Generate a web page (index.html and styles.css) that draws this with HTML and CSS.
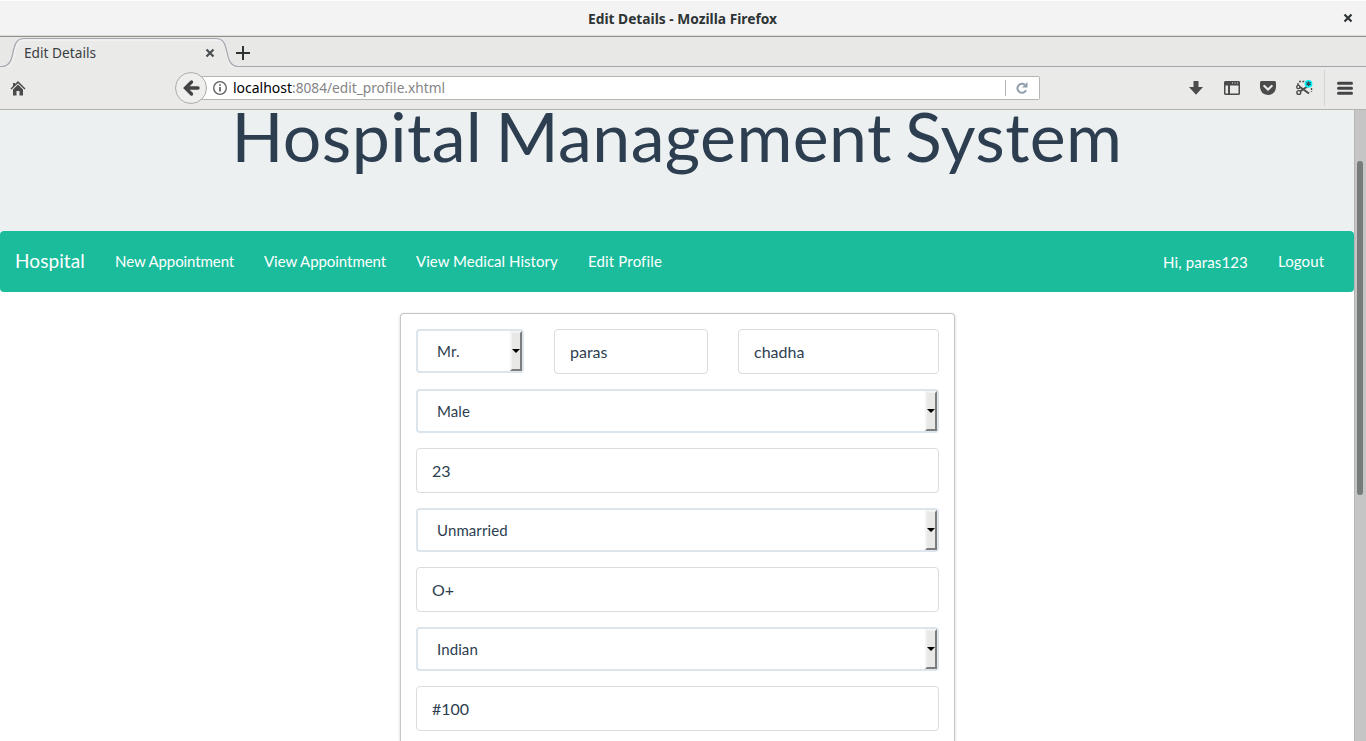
FILE: index.html
```html
<!DOCTYPE html>
<html lang="en">
<head>
<meta charset="utf-8">
<title>Edit Details</title>
<link rel="stylesheet" href="styles.css">
</head>
<body>
<div class="window">
  <header class="titlebar">
    <svg class="title" width="200" height="24"><text x="0" y="15.500" textLength="189" lengthAdjust="spacingAndGlyphs">Edit Details - Mozilla Firefox</text></svg>
    <svg class="close" width="10" height="10" viewBox="0 0 10 10"><path d="M1.5 1.5l7 7M8.5 1.5l-7 7"/></svg>
  </header>
  <div class="tabs">
    <svg class="tabshape" width="1366" height="30" viewBox="0 0 1366 30">
      <path class="tab-hi" d="M0 30.5H5C19 30 11 3 23 3H217C231 3 223 30 235 30.5H1366"/>
      <path class="tab-line" d="M0 29.5H2C18 29 8 1.5 24 1.5H216C232 1.5 222 29 238 29.500H1366"/>
      <text class="tablabel" x="24" y="21" textLength="72" lengthAdjust="spacingAndGlyphs">Edit Details</text>
      <path class="tabx" d="M206.500 12.500l7 7M213.500 12.500l-7 7"/>
      <path class="plus" d="M236 16h14M243 9v14"/>
    </svg>
  </div>
  <div class="toolbar">
    <svg class="home" width="16" height="15" viewBox="0 0 16 15"><path d="M8 0L15.500 7.500 14.500 8.500 8 2.300 1.500 8.500 .5 7.500 3 5V2h2v1z"/><path d="M3 8.500l5-5 5 5V14.500H9.500V10h-3v4.500H3z"/></svg>
    <div class="address">
      <svg class="back" width="32" height="32" viewBox="0 0 32 32"><circle cx="16" cy="16" r="15.500"/><path d="M16.500 10l-6 6 6 6M11 16H23"/></svg>
      <svg class="info" width="14" height="14" viewBox="0 0 14 14"><circle cx="7" cy="7" r="6.300"/><path d="M7 6v4.500M7 3.200v1.600"/></svg>
      <svg class="url" width="214" height="22"><text x="0" y="15.500" textLength="59" lengthAdjust="spacingAndGlyphs">localhost</text><text class="path" x="59" y="15.500" textLength="153" lengthAdjust="spacingAndGlyphs">:8084/edit_profile.xhtml</text></svg>
      <span class="sep"></span>
      <svg class="reload" width="12" height="12" viewBox="0 0 12 12"><path class="arc" d="M9 3A4.500 4.500 0 1 0 10 8.300"/><path class="head" d="M11.500 0V5.500H6z"/></svg>
    </div>
    <div class="actions">
      <svg width="16" height="16" viewBox="0 0 16 16"><path d="M5.500 1h5v6h4.500L8 14.800 1 7h4.500z"/></svg>
      <svg width="16" height="16" viewBox="0 0 16 16"><path fill-rule="evenodd" d="M1 1h14l1 1v12l-1 1H1l-1-1V2zM1.500 5.500v8H4v-8zM6 5.500v8h8.500v-8zM8 2.500v1h1v-1zM10.500 2.500v1h1v-1zM13 2.500v1h1v-1z"/></svg>
      <svg width="16" height="16" viewBox="0 0 16 16"><path d="M1.500 1h13Q16 1 16 2.500V7Q15.500 14.500 8 15 .5 14.500 0 7V2.500Q0 1 1.500 1z"/><path class="check" d="M4.300 6L8 9.500 11.700 6"/></svg>
      <svg class="snip" width="18" height="18" viewBox="0 0 18 18"><path class="dash" d="M4 2.500h7M3 4v3M16.500 9v4"/><path class="scissor" d="M5 12.500L13 7M5 8L14 14.500"/><circle class="ring" cx="3.300" cy="8" r="1.600"/><circle class="ring" cx="3.800" cy="13.500" r="1.900"/><circle class="badge" cx="13.500" cy="4.800" r="3.900"/><path class="star" d="M13.500 2.300v5M11.300 3.500l4.400 2.600M15.700 3.500l-4.400 2.600"/></svg>
      <span class="divider"></span>
      <svg width="16" height="16" viewBox="0 0 16 16"><path class="bars" d="M1.500 3.300h13M1.500 8.300h13M1.500 13.300h13"/></svg>
    </div>
  </div>
  <div class="viewport">
    <main class="page">
      <div class="jumbotron"><h1>Hospital Management System</h1></div>
      <nav class="navbar">
        <a class="brand">Hospital</a>
        <a class="new">New Appointment</a><a class="view">View Appointment</a><a class="history">View Medical History</a><a class="edit">Edit Profile</a>
        <span class="user">Hi, paras123</span><a class="logout">Logout</a>
      </nav>
      <form class="card">
        <div class="row">
          <div class="select">Mr.<span class="drop"></span></div>
          <div class="input">paras</div>
          <div class="input">chadha</div>
        </div>
        <div class="select">Male<span class="drop"></span></div>
        <div class="input">23</div>
        <div class="select">Unmarried<span class="drop"></span></div>
        <div class="input">O+</div>
        <div class="select">Indian<span class="drop"></span></div>
        <div class="input">#100</div>
      </form>
    </main>
    <div class="scrollbar"><div class="thumb"></div></div>
  </div>
</div>
</body>
</html>
```
FILE: styles.css
```css
* { box-sizing: border-box; }
html, body { margin: 0; overflow: hidden; }
body { font-family: Lato, sans-serif; color: #2c3e50; background: #fff; }
svg { display: block; flex: none; overflow: visible; }
.window { width: 1366px; height: 741px; display: flex; flex-direction: column; overflow: hidden; }

.titlebar { height: 37px; flex: none; display: flex; align-items: flex-start; padding: 7px 13px 0 588px; background: #f3f3f3; border-top: 1px solid #fdfdfd; border-bottom: 1px solid #8f918a; box-shadow: inset 0 -1px #dcdcda; }
.title { font: bold 14px "Noto Sans", sans-serif; fill: #2e3436; }
.close { margin: 5px 0 0 auto; stroke: #2e3436; stroke-width: 2.2; }

.tabs { height: 30px; flex: none; background: #e8e8e7; }
.tabshape { fill: none; }
.tab-hi { fill: #eaeae9; stroke: #f7f7f7; }
.tab-line { stroke: #a2a7ae; stroke-width: 1.2; }
.tablabel { font: 14px "Noto Sans", sans-serif; fill: #3a4042; }
.tabx { stroke: #4a4f51; stroke-width: 2.2; }
.plus { stroke: #2e3436; stroke-width: 2; }

.toolbar { height: 43px; flex: none; display: flex; align-items: center; padding: 0 13px 0 10px; background: #eaeae8; border-bottom: 1px solid #b3b4b0; }
.home { fill: #4b4b4b; }
.address { width: 850px; height: 24px; margin-left: 164px; background: #fff; border: 1px solid #b5b5b3; border-left: 0; border-radius: 0 2px 2px 0; display: flex; align-items: center; }
.back { margin-left: -15px; fill: #efefee; stroke: #adadab; }
.back path { fill: none; stroke: #444; stroke-width: 3.4; stroke-linecap: round; }
.info { margin-left: 6px; fill: none; stroke: #5c5c5c; stroke-width: 1.3; }
.info path { stroke-width: 1.7; }
.url { margin-left: 6px; font: 14px "Noto Sans", sans-serif; fill: #000; }
.url .path { fill: #858585; }
.sep { width: 1px; height: 16px; margin-left: auto; background: #b6b6b6; }
.reload { margin: 0 11px 0 10px; }
.reload .arc { fill: none; stroke: #8f9dab; stroke-width: 2; }
.reload .head { fill: #8f9dab; }
.actions { display: flex; align-items: center; margin-left: auto; gap: 20px; fill: #4b4b4b; }
.check { fill: none; stroke: #eaeae8; stroke-width: 2.2; stroke-linecap: round; }
.snip { margin-left: -1px; }
.dash, .scissor, .ring { fill: none; stroke: #4b4b4b; stroke-width: 1.4; }
.dash { stroke-dasharray: 2 1.300; stroke-width: 1.400; }
.scissor { stroke-width: 2; }
.badge { fill: #08f3f8; }
.star { stroke: #26474d; stroke-width: 1.200; }
.divider { width: 1px; height: 36px; margin: 0 -8px 0 -9px; background: #d3d3d1; }
.bars { stroke: #444; stroke-width: 3; stroke-linecap: round; }

.viewport { flex: 1; min-height: 0; display: flex; }
.page { width: 1354px; }
.jumbotron { height: 121px; background: #ecf0f1; }
h1 { margin: 0; font-weight: 400; font-size: 68px; line-height: 52px; letter-spacing: .4px; word-spacing: -4.5px; text-align: center; white-space: nowrap; }
.navbar { height: 61px; display: flex; align-items: center; padding: 0 30px 2px 15px; background: #1abc9c; border-radius: 4px; color: #fff; font-size: 15px; gap: 30px; white-space: nowrap; }
.brand { width: 70px; font-size: 19px; letter-spacing: .07px; }
.new { width: 119px; letter-spacing: -.09px; }
.view { width: 122px; letter-spacing: -.06px; }
.history { width: 142px; letter-spacing: .04px; }
.edit { letter-spacing: .15px; }
.user { width: 85px; margin-left: auto; padding-top: 2px; letter-spacing: .12px; }
.logout { width: 46px; letter-spacing: .1px; }

.card { width: 555px; height: 428px; margin: 21px 0 0 400px; padding: 15px 15px 0; border: 1px solid #c6c6c6; border-bottom: 0; border-radius: 4px 4px 0 0; box-shadow: 0 1px 3px rgba(0,0,0,.2); display: flex; flex-direction: column; gap: 15px; font-size: 15px; }
.row { display: grid; grid-template-columns: 108px 154px 201px; gap: 30px; align-items: start; }
.input { height: 45px; flex: none; border: 1px solid #dadcdd; border-radius: 4px; padding: 1px 15px 0; font-size: 16px; line-height: 42px; }
.select { height: 44px; flex: none; display: flex; justify-content: space-between; border: 2px solid #dce4ec; border-radius: 4px; padding-left: 19px; line-height: 41px; letter-spacing: .1px; }
.drop { width: 12px; height: 40px; display: flex; align-items: center; justify-content: center; background: #e8e8e7; border: 2px solid; border-color: #f3f3f2 #7d7d7d #7d7d7d #f3f3f2; }
.drop::before { content: ""; flex: none; margin: -1px 1px 0 0; border: 3.5px solid transparent; border-width: 4px 4px 0; border-top-color: #000; }

.scrollbar { width: 12px; flex: none; padding: 51px 3px 0 2px; background: #c4c5c4; border-left: 1px solid #b5b5b3; }
.thumb { height: 334px; width: 6px; background: #777b7c; border-radius: 3px; }
```
